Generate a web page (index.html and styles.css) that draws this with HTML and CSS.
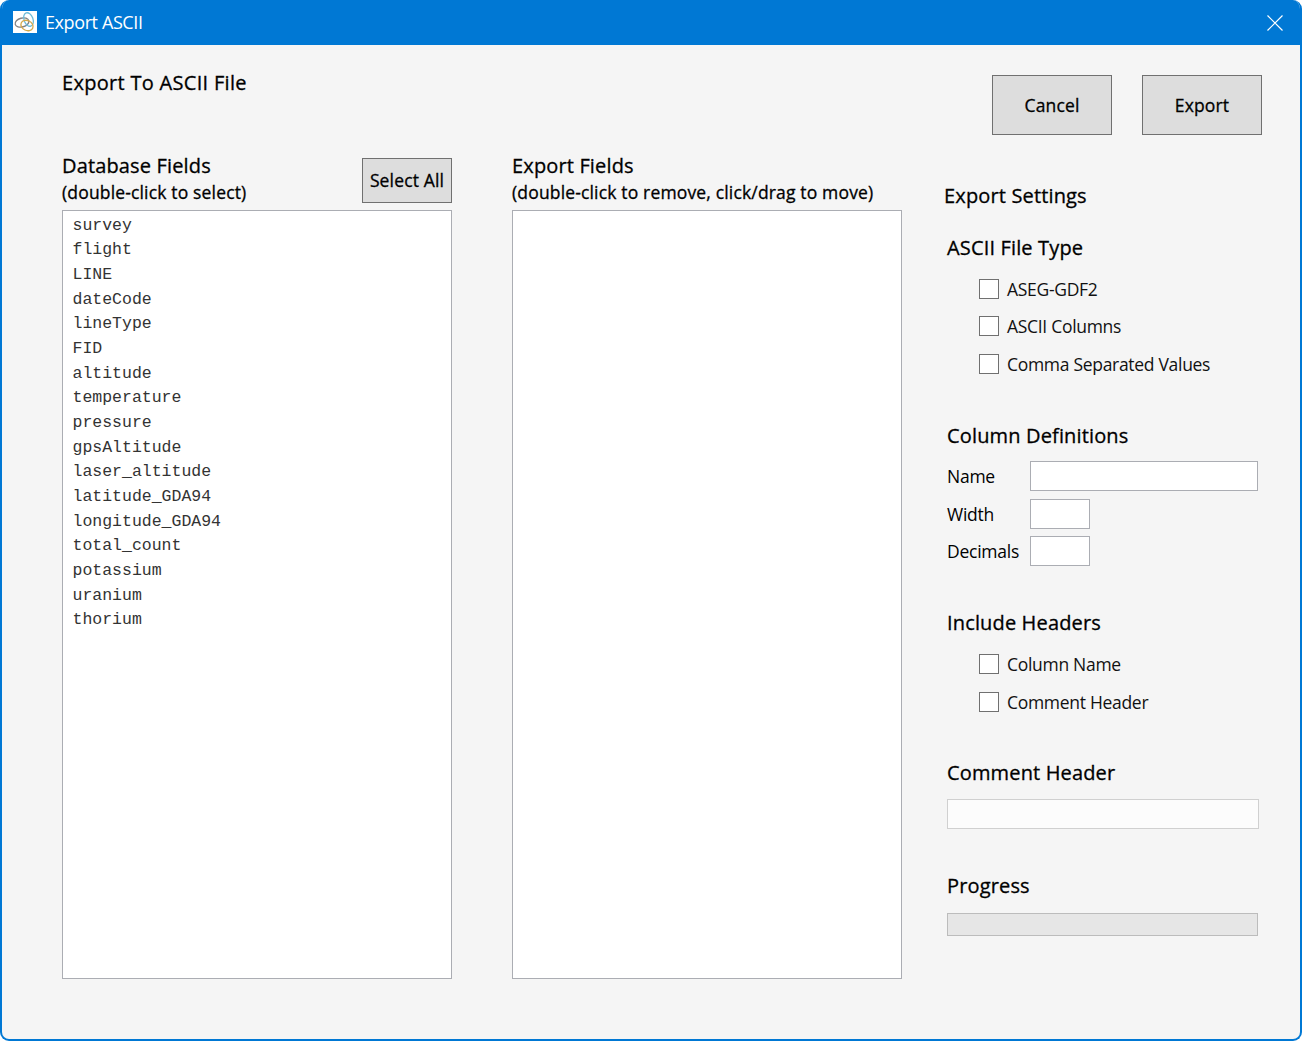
FILE: index.html
```html
<!DOCTYPE html>
<html lang="en">
<head>
    <meta charset="UTF-8">
    <title>Export ASCII</title>
    <link rel="stylesheet" href="styles.css">
</head>
<body>
    <div class="window">
        <div class="titlebar">
            <svg class="app-icon" width="24" height="22" viewBox="0 0 24 22">
                <rect width="24" height="22" fill="#fff"/>
                <ellipse cx="9" cy="11.5" rx="7" ry="4.4" transform="rotate(-15 9 11.5)" fill="none" stroke="#808285" stroke-width="1.3"/>
                <ellipse cx="15.5" cy="8.5" rx="4.5" ry="7" transform="rotate(-20 15.5 8.5)" fill="none" stroke="#6fbcd8" stroke-width="1.3"/>
                <ellipse cx="14" cy="14.5" rx="6.3" ry="5" transform="rotate(25 14 14.5)" fill="none" stroke="#d4a84a" stroke-width="1.3"/>
            </svg>
            <span class="window-title">Export ASCII</span>
            <svg class="close-icon" width="16" height="16" viewBox="0 0 16 16">
                <path d="M0.5 0.5L15.5 15.5M15.5 0.5L0.5 15.5" stroke="#fff" stroke-width="1.2" fill="none"/>
            </svg>
        </div>
        <div class="content">
            <div class="top-row">
                <h1>Export To ASCII File</h1>
                <div class="top-buttons">
                    <button class="btn btn-large">Cancel</button>
                    <button class="btn btn-large">Export</button>
                </div>
            </div>
            <div class="columns">
                <div class="field-column">
                    <div class="column-head">
                        <div>
                            <h2>Database Fields</h2>
                            <p class="hint">(double-click to select)</p>
                        </div>
                        <button class="btn btn-small">Select All</button>
                    </div>
                    <ul class="field-list">
                        <li>survey</li>
                        <li>flight</li>
                        <li>LINE</li>
                        <li>dateCode</li>
                        <li>lineType</li>
                        <li>FID</li>
                        <li>altitude</li>
                        <li>temperature</li>
                        <li>pressure</li>
                        <li>gpsAltitude</li>
                        <li>laser_altitude</li>
                        <li>latitude_GDA94</li>
                        <li>longitude_GDA94</li>
                        <li>total_count</li>
                        <li>potassium</li>
                        <li>uranium</li>
                        <li>thorium</li>
                    </ul>
                </div>
                <div class="field-column">
                    <div class="column-head">
                        <div>
                            <h2>Export Fields</h2>
                            <p class="hint">(double-click to remove, click/drag to move)</p>
                        </div>
                    </div>
                    <ul class="field-list"></ul>
                </div>
                <div class="settings">
                    <h2 class="settings-title">Export Settings</h2>

                    <h2 class="group-title file-type">ASCII File Type</h2>
                    <div class="check-group first-checks">
                        <label class="check"><span class="box"></span>ASEG-GDF2</label>
                        <label class="check"><span class="box"></span>ASCII Columns</label>
                        <label class="check"><span class="box"></span>Comma Separated Values</label>
                    </div>

                    <h2 class="group-title col-defs">Column Definitions</h2>
                    <div class="def-rows">
                        <div class="def-row"><span>Name</span><input class="input-wide" type="text"></div>
                        <div class="def-row"><span>Width</span><input class="input-short" type="text"></div>
                        <div class="def-row"><span>Decimals</span><input class="input-short" type="text"></div>
                    </div>

                    <h2 class="group-title headers">Include Headers</h2>
                    <div class="check-group second-checks">
                        <label class="check"><span class="box"></span>Column Name</label>
                        <label class="check"><span class="box"></span>Comment Header</label>
                    </div>

                    <h2 class="group-title comment">Comment Header</h2>
                    <input class="comment-input" type="text" disabled>

                    <h2 class="group-title progress-title">Progress</h2>
                    <div class="progress"></div>
                </div>
            </div>
        </div>
    </div>
</body>
</html>
```

FILE: styles.css
```css
* {
    box-sizing: border-box;
}
html, body {
    margin: 0;
    background-color: #fff;
}
body {
    font-family: "Open Sans", "Noto Sans", sans-serif;
    color: #000;
}
.window {
    width: 1302px;
    height: 1041px;
    display: flex;
    flex-direction: column;
    background-color: #f5f5f5;
    border: 2px solid #0078d4;
    border-top: none;
    border-radius: 9px;
    overflow: hidden;
}
.titlebar {
    display: flex;
    align-items: center;
    height: 45px;
    margin: 0 -2px;
    padding: 0 19px 0 13px;
    background-color: #0078d4;
    color: #fff;
}
.app-icon {
    margin-top: -1px;
}
.window-title {
    margin: -2px 0 0 8px;
    font-size: 18px;
    letter-spacing: -0.4px;
}
.close-icon {
    margin-left: auto;
}
.content {
    padding: 26px 0 0 60px;
}
h1, h2, p {
    margin: 0;
    font-weight: 400;
    -webkit-text-stroke: 0.3px #000;
}
h1, h2 {
    font-size: 20px;
    line-height: 24px;
    letter-spacing: 0.15px;
}
h1 {
    letter-spacing: 0.3px;
}
.top-row {
    display: flex;
    justify-content: space-between;
    height: 64px;
    padding-right: 38px;
}
.top-buttons {
    display: flex;
    gap: 30px;
    padding-top: 4px;
}
.btn {
    padding: 0;
    font-family: inherit;
    font-size: 17.5px;
    letter-spacing: 0.15px;
    color: #000;
    -webkit-text-stroke: 0.3px #000;
    background-color: #dddddd;
    border: 1px solid #707070;
}
.btn-large {
    width: 120px;
    height: 60px;
}
.btn-small {
    width: 90px;
    height: 45px;
    margin-top: 4px;
    padding-bottom: 2px;
}
.columns {
    display: flex;
    gap: 60px;
}
.field-column {
    width: 390px;
}
.column-head {
    display: flex;
    justify-content: space-between;
    height: 75px;
    padding-top: 19px;
}
.hint {
    margin-top: 3px;
    font-size: 17.5px;
    line-height: 22px;
    letter-spacing: 0.16px;
}
.field-list {
    height: 769px;
    margin: 0;
    padding: 2.8px 9.5px;
    list-style: none;
    background-color: #fff;
    border: 1px solid #abadb3;
    font-family: "Liberation Mono", monospace;
    font-size: 16.5px;
    line-height: 24.65px;
    color: #333;
}
.settings {
    width: 320px;
    margin-left: -18px;
    padding-top: 49px;
}
.group-title {
    margin-left: 3px;
}
.file-type {
    margin-top: 28px;
}
.col-defs {
    margin-top: 48.5px;
}
.headers {
    margin-top: 45px;
}
.comment {
    margin-top: 47px;
}
.progress-title {
    margin-top: 45px;
}
.check-group {
    display: flex;
    flex-direction: column;
    gap: 13.7px;
    margin-left: 35px;
}
.first-checks {
    margin-top: 16.5px;
}
.second-checks {
    margin-top: 17px;
}
.check {
    display: flex;
    align-items: center;
    height: 24px;
    font-size: 17.5px;
    letter-spacing: -0.3px;
    color: #111;
}
.box {
    width: 20px;
    height: 20px;
    margin-right: 8px;
    background-color: #fff;
    border: 1px solid #707070;
}
.def-rows {
    display: flex;
    flex-direction: column;
    gap: 7.5px;
    margin: 13px 0 0 3px;
}
.def-row {
    display: flex;
    align-items: center;
    font-size: 17.5px;
    letter-spacing: -0.25px;
}
.def-row span {
    width: 83px;
}
.def-row input {
    height: 30px;
    background-color: #fff;
    border: 1px solid #abadb3;
}
.input-wide {
    width: 228px;
}
.input-short {
    width: 60px;
}
.comment-input {
    display: block;
    width: 312px;
    height: 30px;
    margin: 14px 0 0 3px;
    background-color: #fcfcfc;
    border: 1px solid #d0d0d0;
}
.progress {
    width: 311px;
    height: 23px;
    margin: 15px 0 0 3px;
    background-color: #e6e6e6;
    border: 1px solid #bcbcbc;
}
```
